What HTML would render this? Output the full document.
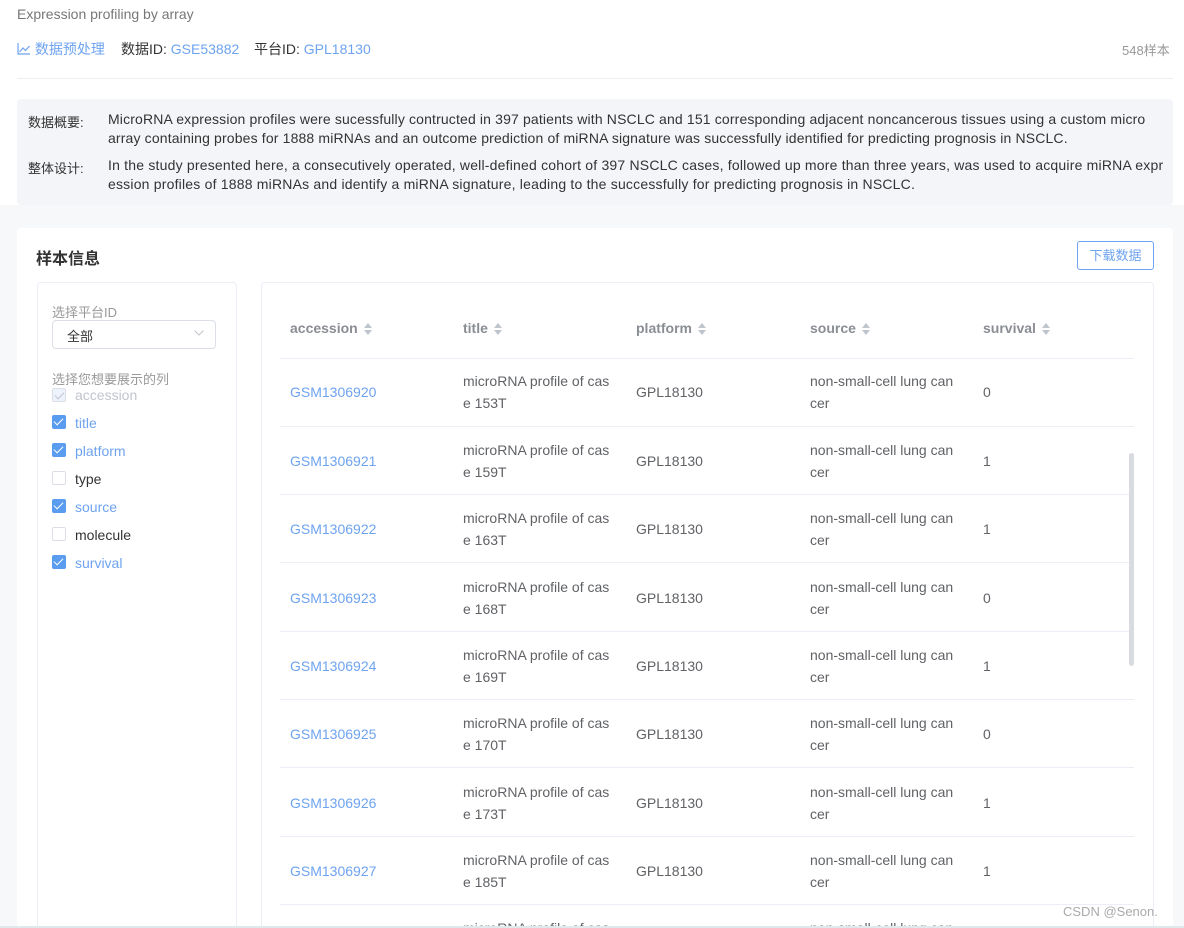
<!DOCTYPE html>
<html><head><meta charset="utf-8">
<style>
*{margin:0;padding:0;box-sizing:border-box}
html,body{width:1184px;height:928px;overflow:hidden}
body{background:#fff;font-family:"Liberation Sans","Noto Sans CJK SC",sans-serif;font-size:14px;color:#606266;position:relative}
.a{position:absolute}
.blue{color:#6ea3f0}
.hd{font-weight:bold;color:#8a8d94;font-size:14px}
.sort{display:inline-block;vertical-align:middle;margin-left:6px;width:8px;height:12px;position:relative}
.sort:before{content:"";position:absolute;left:0;top:0;border:4px solid transparent;border-bottom:5px solid #c0c4cc;border-top:0}
.sort:after{content:"";position:absolute;left:0;bottom:0;border:4px solid transparent;border-top:5px solid #c0c4cc;border-bottom:0}
.cb{position:absolute;left:52px;width:14px;height:14px;border-radius:2px}
.cb.on{background:#5a9cf0}
.cb.on:after{content:"";position:absolute;left:4px;top:1px;width:4px;height:8px;border:solid #fff;border-width:0 1.5px 1.5px 0;transform:rotate(45deg)}
.cb.off{border:1px solid #dcdfe6;background:#fff}
.cb.dis{border:1px solid #dcdfe6;background:#edf2fc}
.cb.dis:after{content:"";position:absolute;left:4px;top:1px;width:4px;height:8px;border:solid #c0c4cc;border-width:0 1.5px 1.5px 0;transform:rotate(45deg)}
.lbl{position:absolute;left:75px;font-size:14px}
.row{position:absolute;left:280px;width:854px;height:68px;border-top:1px solid #ebeef5}
.row div{position:absolute;font-size:14px;line-height:22px;color:#606266}
</style></head><body>
<div class="a" style="left:0;top:205px;width:1184px;height:723px;background:#f7f8fa"></div>
<div class="a" style="left:17px;top:6px;color:#777;font-size:14px">Expression profiling by array</div>
<div class="a" style="left:17px;top:39px;font-size:14px"><svg width="14" height="12" viewBox="0 0 14 12" style="vertical-align:-1px"><path d="M1 0V11H13" stroke="#6ea3f0" fill="none" stroke-width="1.2"/><path d="M2.5 9L6 5L8.5 7.5L12.5 3" stroke="#6ea3f0" fill="none" stroke-width="1.2"/></svg> <span class="blue">数据预处理</span></div>
<div class="a" style="left:121px;top:39px;color:#333">数据ID: <span class="blue">GSE53882</span></div>
<div class="a" style="left:254px;top:39px;color:#333">平台ID: <span class="blue">GPL18130</span></div>
<div class="a" style="left:1122px;top:40px;color:#999;font-size:13px">548样本</div>
<div class="a" style="left:17px;top:78px;width:1156px;height:1px;background:#eceef2"></div>
<div class="a" style="left:17px;top:99px;width:1156px;height:106px;background:#f4f5f8;border-radius:4px"></div>
<div class="a" style="left:28px;top:112px;color:#333;font-size:13px">数据概要:</div>
<div class="a" style="left:108px;top:110px;width:1052px;color:#333;line-height:19px;font-size:14px;letter-spacing:0.15px">MicroRNA expression profiles were sucessfully contructed in 397 patients with NSCLC and 151 corresponding adjacent noncancerous tissues using a custom micro array containing probes for 1888 miRNAs and an outcome prediction of miRNA signature was successfully identified for predicting prognosis in NSCLC.</div>
<div class="a" style="left:28px;top:158px;color:#333;font-size:13px">整体设计:</div>
<div class="a" style="left:108px;top:156px;width:1056px;color:#333;line-height:19px;font-size:14px;word-break:break-all;letter-spacing:0.2px">In the study presented here, a consecutively operated, well-defined cohort of 397 NSCLC cases, followed up more than three years, was used to acquire miRNA expression profiles of 1888 miRNAs and identify a miRNA signature, leading to the successfully for predicting prognosis in NSCLC.</div>
<div class="a" style="left:17px;top:228px;width:1156px;height:700px;background:#fff;border-radius:4px"></div>
<div class="a" style="left:36px;top:245px;font-size:16px;font-weight:bold;color:#333">样本信息</div>
<div class="a" style="left:1077px;top:241px;width:77px;height:29px;border:1px solid #6ea3f0;border-radius:3px;color:#6ea3f0;font-size:13px;text-align:center;line-height:27px">下载数据</div>
<div class="a" style="left:37px;top:282px;width:200px;height:660px;border:1px solid #ebeef5;border-radius:4px"></div>
<div class="a" style="left:52px;top:302px;color:#999;font-size:13px">选择平台ID</div>
<div class="a" style="left:52px;top:320px;width:164px;height:29px;border:1px solid #dcdfe6;border-radius:4px"></div>
<div class="a" style="left:67px;top:326px;color:#333;font-size:13px">全部</div>
<svg class="a" style="left:194px;top:330px" width="10" height="6"><path d="M0.5 0.5L5 5L9.5 0.5" stroke="#c0c4cc" fill="none"/></svg>
<div class="a" style="left:52px;top:369px;color:#999;font-size:13px">选择您想要展示的列</div>
<div class="cb dis" style="top:388px"></div><div class="lbl" style="top:387px;color:#c0c4cc">accession</div>
<div class="cb on" style="top:415px"></div><div class="lbl blue" style="top:415px">title</div>
<div class="cb on" style="top:443px"></div><div class="lbl blue" style="top:443px">platform</div>
<div class="cb off" style="top:471px"></div><div class="lbl" style="top:471px;color:#333">type</div>
<div class="cb on" style="top:499px"></div><div class="lbl blue" style="top:499px">source</div>
<div class="cb off" style="top:527px"></div><div class="lbl" style="top:527px;color:#333">molecule</div>
<div class="cb on" style="top:555px"></div><div class="lbl blue" style="top:555px">survival</div>
<div class="a" style="left:261px;top:282px;width:893px;height:660px;border:1px solid #ebeef5;border-radius:4px"></div>
<div class="a hd" style="left:290px;top:320px">accession<span class="sort"></span></div>
<div class="a hd" style="left:463px;top:320px">title<span class="sort"></span></div>
<div class="a hd" style="left:636px;top:320px">platform<span class="sort"></span></div>
<div class="a hd" style="left:810px;top:320px">source<span class="sort"></span></div>
<div class="a hd" style="left:983px;top:320px">survival<span class="sort"></span></div>
<div class="row" style="top:358px"><div style="left:10px;top:22px;color:#6ea3f0">GSM1306920</div><div style="left:183px;top:11px">microRNA profile of cas<br>e 153T</div><div style="left:356px;top:22px">GPL18130</div><div style="left:530px;top:11px">non-small-cell lung can<br>cer</div><div style="left:703px;top:22px">0</div></div>
<div class="row" style="top:426px"><div style="left:10px;top:23px;color:#6ea3f0">GSM1306921</div><div style="left:183px;top:12px">microRNA profile of cas<br>e 159T</div><div style="left:356px;top:23px">GPL18130</div><div style="left:530px;top:12px">non-small-cell lung can<br>cer</div><div style="left:703px;top:23px">1</div></div>
<div class="row" style="top:494px"><div style="left:10px;top:23px;color:#6ea3f0">GSM1306922</div><div style="left:183px;top:12px">microRNA profile of cas<br>e 163T</div><div style="left:356px;top:23px">GPL18130</div><div style="left:530px;top:12px">non-small-cell lung can<br>cer</div><div style="left:703px;top:23px">1</div></div>
<div class="row" style="top:562px"><div style="left:10px;top:24px;color:#6ea3f0">GSM1306923</div><div style="left:183px;top:13px">microRNA profile of cas<br>e 168T</div><div style="left:356px;top:24px">GPL18130</div><div style="left:530px;top:13px">non-small-cell lung can<br>cer</div><div style="left:703px;top:24px">0</div></div>
<div class="row" style="top:631px"><div style="left:10px;top:23px;color:#6ea3f0">GSM1306924</div><div style="left:183px;top:12px">microRNA profile of cas<br>e 169T</div><div style="left:356px;top:23px">GPL18130</div><div style="left:530px;top:12px">non-small-cell lung can<br>cer</div><div style="left:703px;top:23px">1</div></div>
<div class="row" style="top:699px"><div style="left:10px;top:23px;color:#6ea3f0">GSM1306925</div><div style="left:183px;top:12px">microRNA profile of cas<br>e 170T</div><div style="left:356px;top:23px">GPL18130</div><div style="left:530px;top:12px">non-small-cell lung can<br>cer</div><div style="left:703px;top:23px">0</div></div>
<div class="row" style="top:767px"><div style="left:10px;top:24px;color:#6ea3f0">GSM1306926</div><div style="left:183px;top:13px">microRNA profile of cas<br>e 173T</div><div style="left:356px;top:24px">GPL18130</div><div style="left:530px;top:13px">non-small-cell lung can<br>cer</div><div style="left:703px;top:24px">1</div></div>
<div class="row" style="top:836px"><div style="left:10px;top:23px;color:#6ea3f0">GSM1306927</div><div style="left:183px;top:12px">microRNA profile of cas<br>e 185T</div><div style="left:356px;top:23px">GPL18130</div><div style="left:530px;top:12px">non-small-cell lung can<br>cer</div><div style="left:703px;top:23px">1</div></div>
<div class="row" style="top:904px;height:24px;overflow:hidden"><div style="left:183px;top:12px">microRNA profile of cas</div><div style="left:530px;top:12px">non-small-cell lung can</div></div>
<div class="a" style="left:1129px;top:453px;width:5px;height:213px;background:#d8dbe0;border-radius:3px"></div>
<div class="a" style="left:0;top:926px;width:1184px;height:2px;background:#dfe8ea"></div>
<div class="a" style="left:1063px;top:904px;color:#aaa;font-size:13px">CSDN @Senon.</div>
</body></html>
